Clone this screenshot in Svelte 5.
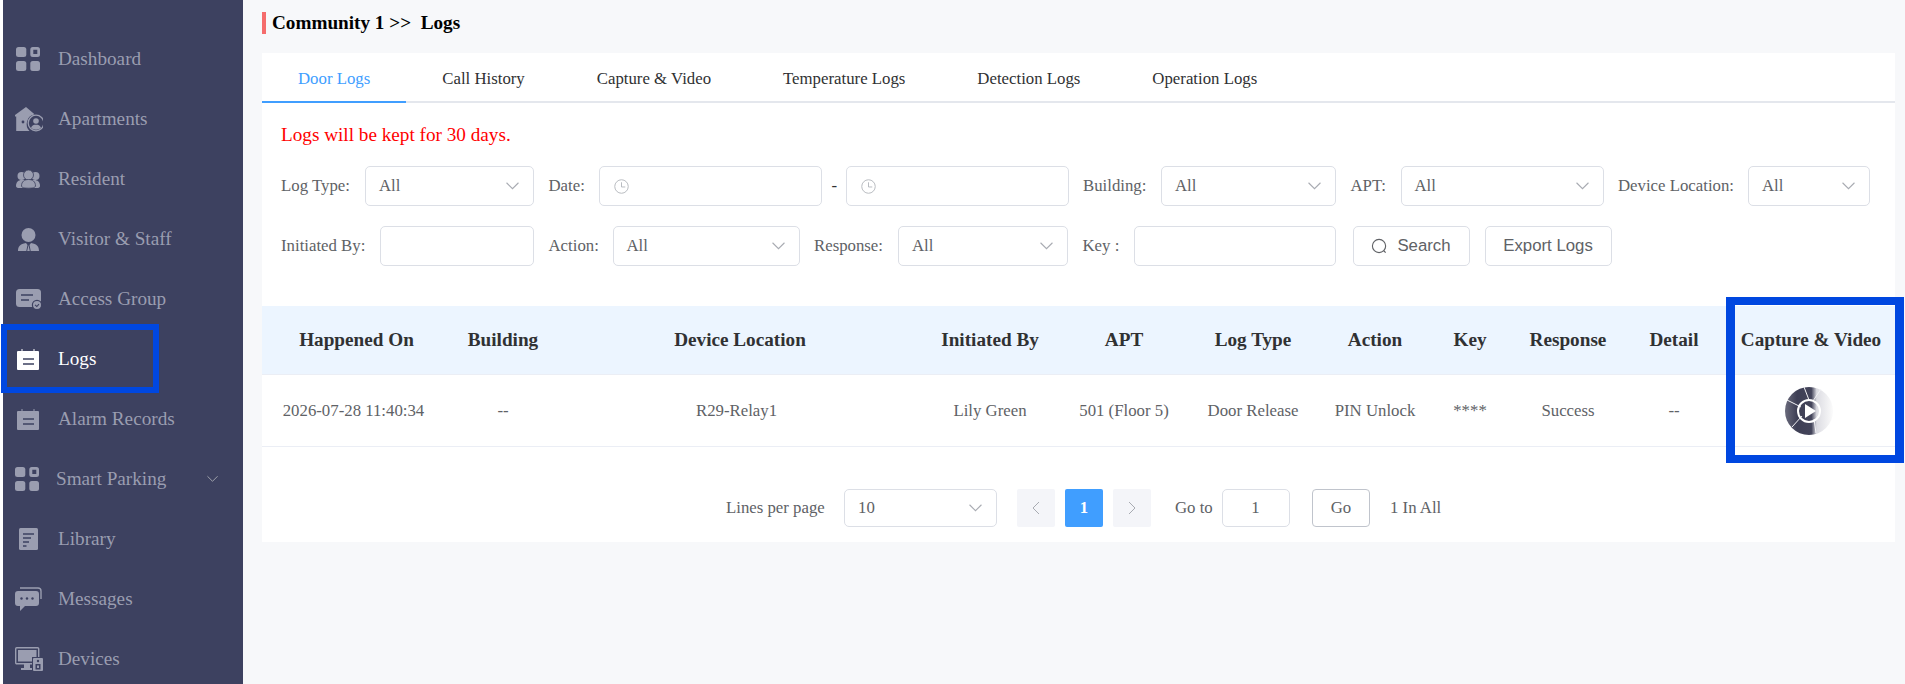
<script>
  const nav = [
    { label: 'Dashboard', icon: 'grid' },
    { label: 'Apartments', icon: 'home' },
    { label: 'Resident', icon: 'people' },
    { label: 'Visitor & Staff', icon: 'staff' },
    { label: 'Access Group', icon: 'card' },
    { label: 'Logs', icon: 'cal', active: true },
    { label: 'Alarm Records', icon: 'cal' },
    { label: 'Smart Parking', icon: 'grid', sub: true },
    { label: 'Library', icon: 'doc' },
    { label: 'Messages', icon: 'chat' },
    { label: 'Devices', icon: 'device' }
  ]

  const tabs = ['Door Logs', 'Call History', 'Capture & Video', 'Temperature Logs', 'Detection Logs', 'Operation Logs']

  const firstRow = [
    { label: 'Log Type:', lw: 84, w: 169, type: 'select' },
    { label: 'Date:', lw: 50, w: 223, type: 'date' },
    { label: '-', lw: 24, w: 223, type: 'date', dash: true },
    { label: 'Building:', lw: 78, w: 175, type: 'select' },
    { label: 'APT:', lw: 50, w: 203, type: 'select' },
    { label: 'Device Location:', lw: 130, w: 122, type: 'select' }
  ]

  const secondRow = [
    { label: 'Initiated By:', lw: 99, w: 154, type: 'input' },
    { label: 'Action:', lw: 64, w: 187, type: 'select' },
    { label: 'Response:', lw: 84, w: 170, type: 'select' },
    { label: 'Key :', lw: 51, w: 202, type: 'input' }
  ]

  const columns = [
    { title: 'Happened On', w: 177, value: '2026-07-28 11:40:34' },
    { title: 'Building', w: 128, value: '--' },
    { title: 'Device Location', w: 346, value: 'R29-Relay1' },
    { title: 'Initiated By', w: 154, value: 'Lily Green' },
    { title: 'APT', w: 114, value: '501 (Floor 5)' },
    { title: 'Log Type', w: 144, value: 'Door Release' },
    { title: 'Action', w: 100, value: 'PIN Unlock' },
    { title: 'Key', w: 90, value: '****' },
    { title: 'Response', w: 106, value: 'Success' },
    { title: 'Detail', w: 106, value: '--' },
    { title: 'Capture & Video', w: 168 }
  ]
</script>

{#snippet navIcon(name)}
  <svg class="nav-icon" viewBox="0 0 30 30" fill="currentColor">
    {#if name === 'grid'}
      <rect x="3" y="3" width="10.300" height="10" rx="2.500" />
      <path fill-rule="evenodd" d="M19.800 3h4.700a2.500 2.500 0 0 1 2.500 2.500v5a2.500 2.500 0 0 1-2.500 2.500h-4.700a2.500 2.500 0 0 1-2.500-2.500v-5A2.500 2.500 0 0 1 19.800 3zm.5 2.800v4.300h4V5.800z" />
      <rect x="3" y="17" width="10.300" height="10" rx="2.500" />
      <rect x="17.300" y="17" width="9.700" height="10" rx="2.500" />
    {:else if name === 'home'}
      <path d="M13 3 2 11v1.500h1.200V27h13.300a10 10 0 0 1 5-16.700L13 3z" />
      <circle cx="10" cy="18" r="1.400" fill="#3d4160" />
      <circle cx="23" cy="19" r="7.800" fill="none" stroke="currentColor" stroke-width="1.300" />
      <circle cx="23" cy="17" r="2.800" />
      <path d="M18 24c1-2.800 2.800-3.300 5-3.300s4 .5 5 3.300a7.800 7.800 0 0 1-10 0z" />
    {:else if name === 'people'}
      <circle cx="8.500" cy="12" r="4" />
      <circle cx="22.500" cy="12" r="4" />
      <path d="M3 22c0-4 2.500-6 5.500-6h13c3 0 5.500 2 5.500 6 0 1.500-1.500 2-3 2H6c-1.500 0-3-.5-3-2z" />
      <circle cx="15.500" cy="11" r="5" stroke="#3d4160" stroke-width=".8" />
      <path d="M8.500 22c0-4.500 3-6.500 7-6.500s7 2 7 6.500c0 1.500-3 2.200-7 2.200s-7-.7-7-2.200z" stroke="#3d4160" stroke-width=".8" />
    {:else if name === 'staff'}
      <circle cx="15.500" cy="11" r="7" />
      <path d="M5 27c0-4.500 2-7 8-8l1.500 2-1.200 6H5zM26 27c0-4.500-2-7-8-8l-1.500 2 1.200 6H26z" />
      <path d="M15.500 21 14.200 27h2.600l-1.300-6z" />
    {:else if name === 'card'}
      <rect x="3" y="5" width="25" height="18" rx="3.500" />
      <path d="M8 11h12M8 16h8" stroke="#3d4160" stroke-width="1.300" />
      <circle cx="24" cy="21" r="4.600" stroke="#3d4160" stroke-width="1.200" />
      <path d="m22 20.800 1.800 1.700 2.200-2.400" fill="none" stroke="#3d4160" stroke-width="1.100" />
    {:else if name === 'cal'}
      <path d="M5 7h3.500V5h1v2h11V5h1v2H25a1 1 0 0 1 1 1v17a1 1 0 0 1-1 1H5a1 1 0 0 1-1-1V8a1 1 0 0 1 1-1z" />
      <path d="M10 15h11M10 20h11" stroke="#3d4160" stroke-width="1.300" />
    {:else if name === 'doc'}
      <rect x="6" y="4" width="19" height="22" rx="1.500" />
      <path d="M10 10h11M10 14h8M10 18h6M10 22h3.500" stroke="#3d4160" stroke-width="1.300" />
    {:else if name === 'chat'}
      <path d="M7 4h18a3 3 0 0 1 3 3v8" fill="none" stroke="currentColor" stroke-width="1.400" />
      <path d="M5 7h18a3 3 0 0 1 3 3v9a3 3 0 0 1-3 3H12l-5 5v-5H5a3 3 0 0 1-3-3v-9a3 3 0 0 1 3-3z" />
      <circle cx="8.500" cy="14.500" r="1.200" fill="#3d4160" />
      <circle cx="14" cy="14.500" r="1.200" fill="#3d4160" />
      <circle cx="19.500" cy="14.500" r="1.200" fill="#3d4160" />
    {:else if name === 'device'}
      <rect x="2.700" y="3.700" width="23" height="16" rx="1" fill="none" stroke="currentColor" stroke-width="1.400" />
      <rect x="5" y="6" width="18.500" height="11.500" />
      <path d="M11 20h6v4h4v2H8v-2h3z" />
      <rect x="19" y="13" width="12" height="15" fill="#3d4160" />
      <rect x="20" y="14" width="10" height="13" rx="1" />
      <circle cx="25" cy="17" r="1.200" fill="#3d4160" />
      <rect x="22.500" y="20" width="5" height="5.500" fill="#3d4160" />
      <rect x="24" y="21.500" width="2" height="2.500" />
    {/if}
  </svg>
{/snippet}

{#snippet chevron()}
  <svg class="chevron" viewBox="0 0 12 7" fill="none" stroke="currentColor" stroke-width="1"><path d="m.5.5 5.500 5.500 5.500-5.500" /></svg>
{/snippet}

{#snippet field(f)}
  <span class="label" class:dash={f.dash} style="width: {f.lw}px">{f.label}</span>
  <div class="control" style="width: {f.w}px">
    {#if f.type === 'select'}
      <span>All</span>
      {@render chevron()}
    {:else if f.type === 'date'}
      <svg class="clock" viewBox="0 0 16 16" fill="none" stroke="currentColor" stroke-width="1"><circle cx="8" cy="8" r="7.200" /><path d="M8 3.500v5h4" /></svg>
    {/if}
  </div>
{/snippet}

<div class="page">
  <aside class="sidebar">
    <nav>
      {#each nav as item}
        <div class="nav-item" class:active={item.active} class:sub={item.sub}>
          {@render navIcon(item.icon)}
          <span>{item.label}</span>
          {#if item.sub}
            {@render chevron()}
          {/if}
        </div>
      {/each}
    </nav>
  </aside>

  <main>
    <h1 class="crumb">Community 1 &gt;&gt;&nbsp; Logs</h1>

    <section class="panel">
      <div class="tabs">
        {#each tabs as tab, i}
          <div class="tab" class:active={i === 0}>{tab}</div>
        {/each}
      </div>

      <div class="filters">
        <p class="notice">Logs will be kept for 30 days.</p>
        <div class="row">
          {#each firstRow as f}
            <div class="field" class:joined={f.dash}>{@render field(f)}</div>
          {/each}
        </div>
        <div class="row">
          {#each secondRow as f}
            <div class="field">{@render field(f)}</div>
          {/each}
          <div class="buttons">
            <button class="btn search">
              <svg viewBox="0 0 18 18" fill="none" stroke="currentColor" stroke-width="1.200"><circle cx="8.500" cy="8.500" r="7" /><path d="m13.500 13.500 2 2" /></svg>
              Search
            </button>
            <button class="btn export">Export Logs</button>
          </div>
        </div>
      </div>

      <table>
        <colgroup>
          {#each columns as c}
            <col style="width: {c.w}px" />
          {/each}
        </colgroup>
        <thead>
          <tr>
            {#each columns as c}
              <th>{c.title}</th>
            {/each}
          </tr>
        </thead>
        <tbody>
          <tr>
            {#each columns as c}
              <td>
                {#if c.value}
                  {c.value}
                {:else}
                  <svg class="thumb" viewBox="0 0 50 50">
                    <defs>
                      <linearGradient id="lens" x1="0" x2="1" y1="0" y2="0">
                        <stop offset="0" stop-color="#6a6b7c" />
                        <stop offset="0.25" stop-color="#3e3f55" />
                        <stop offset="0.55" stop-color="#43445a" />
                        <stop offset="0.66" stop-color="#dcdce2" />
                        <stop offset="1" stop-color="#fbfbfb" />
                      </linearGradient>
                    </defs>
                    <circle cx="25" cy="25" r="24" fill="url(#lens)" />
                    <path d="M3 14 17 21M8 41 18 30M20 1l5 13M37 3l-8 12M32 47l-2-14" stroke="#f2f2f5" stroke-width="1" fill="none" />
                    <circle cx="25" cy="25" r="11" fill="none" stroke="#fff" stroke-width="2" />
                    <path d="M21 18 32 25l-11 7z" fill="#fff" />
                  </svg>
                {/if}
              </td>
            {/each}
          </tr>
        </tbody>
      </table>

      <div class="pager">
        <span class="lines">Lines per page</span>
        <div class="control pager-select"><span>10</span>{@render chevron()}</div>
        <div class="page-btn prev">
          <svg viewBox="0 0 8 14" fill="none" stroke="currentColor" stroke-width="1"><path d="M7 1 1 7l6 6" /></svg>
        </div>
        <div class="page-btn current">1</div>
        <div class="page-btn">
          <svg viewBox="0 0 8 14" fill="none" stroke="currentColor" stroke-width="1"><path d="m1 1 6 6-6 6" /></svg>
        </div>
        <span class="goto">Go to</span>
        <div class="control goto-input">1</div>
        <button class="go">Go</button>
        <span class="total">1 In All</span>
      </div>
    </section>
  </main>

  <!-- blue annotation frames drawn on top of the screenshot -->
  <div class="mark mark-nav"></div>
  <div class="mark mark-col"></div>
</div>

<style>
  :global(body) {
    margin: 0;
    background: #fff;
  }

  .page {
    position: relative;
    display: flex;
    height: 684px;
    padding-left: 3px;
    box-sizing: border-box;
    overflow: hidden;
    font-family: "Liberation Serif", "Times New Roman", serif;
    color: #606266;
  }

  .sidebar {
    width: 240px;
    flex-shrink: 0;
    background: #3d4160;
    padding-top: 29px;
    box-sizing: border-box;
  }

  .nav-item {
    display: flex;
    align-items: center;
    height: 60px;
    padding-left: 10px;
    color: #9a9db0;
    font-size: 19.200px;
  }
  .nav-item.active {
    color: #fff;
  }
  .nav-item.sub {
    padding-left: 9px;
  }
  .nav-item.sub .nav-icon {
    margin-right: 14px;
  }
  .nav-item.sub .chevron {
    margin-left: 41px;
    width: 11px;
  }
  .nav-icon {
    width: 30px;
    height: 30px;
    margin-right: 15px;
    flex-shrink: 0;
  }

  main {
    flex: 1;
    min-width: 0;
    background: #f7f8fa;
    padding-left: 19px;
    padding-right: 10px;
  }

  .crumb {
    margin: 12px 0 19px;
    height: 22px;
    line-height: 22px;
    padding-left: 6px;
    border-left: 4px solid #f56c6c;
    font-size: 19.200px;
    font-weight: bold;
    color: #000;
  }

  .panel {
    background: #fff;
    height: 489px;
  }

  .tabs {
    display: flex;
    height: 48px;
    border-bottom: 2px solid #e4e7ed;
  }
  .tab {
    height: 46px;
    padding: 2px 36px 0;
    line-height: 48px;
    font-size: 16.800px;
    color: #303133;
  }
  .tab.active {
    color: #409eff;
    border-bottom: 2px solid #409eff;
  }

  .filters {
    padding: 0 19px;
  }
  .notice {
    margin: 0;
    height: 63px;
    line-height: 64px;
    font-size: 19.200px;
    color: #f00;
  }
  .row {
    display: flex;
    gap: 14.500px;
    height: 40px;
    margin-bottom: 20px;
    font-size: 16.800px;
  }
  .field {
    display: flex;
    align-items: center;
  }
  .field.joined {
    margin-left: -14.500px;
  }
  .label {
    flex-shrink: 0;
    white-space: nowrap;
  }
  .label.dash {
    color: #303133;
    padding-left: 10px;
    box-sizing: border-box;
  }
  .control {
    display: flex;
    align-items: center;
    justify-content: space-between;
    height: 40px;
    box-sizing: border-box;
    padding: 0 14px 0 13px;
    border: 1px solid #dcdfe6;
    border-radius: 5px;
    background: #fff;
    font-size: 16.800px;
  }
  .chevron {
    width: 13px;
    height: 8px;
    color: #a8abb2;
    flex-shrink: 0;
  }
  .clock {
    width: 15px;
    height: 15px;
    margin-left: 1px;
    color: #b4b7bd;
  }

  .buttons {
    display: flex;
    gap: 15px;
    margin-left: 2.500px;
  }
  .btn {
    height: 40px;
    padding: 0;
    box-sizing: border-box;
    border: 1px solid #dcdfe6;
    border-radius: 5px;
    background: #fff;
    color: #606266;
    font-family: "Liberation Sans", Arial, sans-serif;
    font-size: 16.800px;
    display: flex;
    align-items: center;
    justify-content: center;
  }
  .btn svg {
    width: 17px;
    height: 17px;
    margin-right: 9px;
  }
  .search {
    width: 117px;
  }
  .export {
    width: 127px;
  }

  table {
    width: 100%;
    table-layout: fixed;
    border-collapse: collapse;
    margin-top: 40px;
  }
  th {
    height: 68px;
    padding: 0;
    background: #ecf5ff;
    border-bottom: 1px solid #ebeef5;
    color: #303133;
    font-size: 19.200px;
    font-weight: bold;
    white-space: nowrap;
  }
  td {
    height: 71px;
    padding: 0;
    border-bottom: 1px solid #ebeef5;
    text-align: center;
    font-size: 16.800px;
    white-space: nowrap;
  }
  th:first-child {
    padding-left: 12px;
  }
  td:first-child {
    padding-left: 6px;
  }
  td:nth-child(3) {
    padding-right: 7px;
  }
  .thumb {
    display: block;
    width: 50px;
    height: 50px;
    margin: 0 auto;
    transform: translateX(-2px);
    filter: blur(0.4px);
  }

  .pager {
    display: flex;
    align-items: center;
    height: 38px;
    margin-top: 42px;
    padding-left: 464px;
    font-size: 16.800px;
  }
  .lines {
    width: 118px;
    flex-shrink: 0;
    white-space: nowrap;
  }
  .pager-select {
    width: 153px;
    height: 38px;
  }
  .page-btn {
    width: 38px;
    height: 38px;
    margin-left: 10px;
    display: flex;
    align-items: center;
    justify-content: center;
    background: #f4f5f9;
    border-radius: 2px;
    color: #a8abb2;
  }
  .page-btn.prev {
    margin-left: 20px;
  }
  .page-btn svg {
    width: 8px;
    height: 14px;
  }
  .page-btn.current {
    background: #409eff;
    color: #fff;
    font-weight: bold;
  }
  .goto {
    margin-left: 24px;
    width: 47px;
    white-space: nowrap;
  }
  .goto-input {
    width: 68px;
    height: 38px;
    justify-content: center;
  }
  .go {
    width: 58px;
    height: 38px;
    margin-left: 22px;
    padding: 0;
    border: 1px solid #c0c4cc;
    border-radius: 4px;
    background: #fff;
    color: #606266;
    font-family: inherit;
    font-size: 16.800px;
  }
  .total {
    margin-left: 20px;
  }

  .mark {
    position: absolute;
    box-sizing: border-box;
    border-style: solid;
    border-color: #0047e0;
    pointer-events: none;
  }
  .mark-nav {
    left: 1px;
    top: 324px;
    width: 158px;
    height: 69px;
    border-width: 6px;
  }
  .mark-col {
    left: 1726px;
    top: 297px;
    width: 178px;
    height: 166px;
    border-width: 8px 9px;
  }
</style>
